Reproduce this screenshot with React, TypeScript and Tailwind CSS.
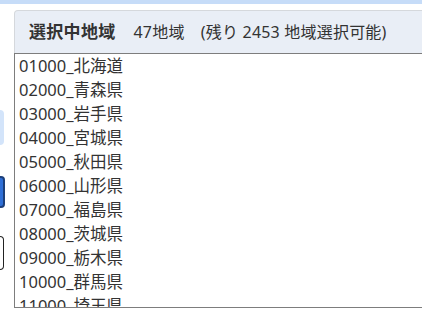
const PREFS = [
  '01000_北海道',
  '02000_青森県',
  '03000_岩手県',
  '04000_宮城県',
  '05000_秋田県',
  '06000_山形県',
  '07000_福島県',
  '08000_茨城県',
  '09000_栃木県',
  '10000_群馬県',
  '11000_埼玉県',
];

export default function App() {
  return (
    <div
      className="w-[422px] h-[330px] overflow-hidden bg-white text-[#333]"
      style={{ fontFamily: '"Noto Sans", "Noto Sans CJK JP", sans-serif' }}
    >
      <div className="h-[4px] bg-[#c6dcf8]" />
      <div className="flex">
        {/* clipped buttons of the neighbouring panel */}
        <div className="w-[6px] shrink-0 flex flex-col">
          <div className="mt-[106px] h-[35px] w-[4px] rounded-r-[4px] bg-[#d3e4fa]" />
          <div className="mt-[31px] h-[32px] w-[5px] rounded-r-[4px] border-2 border-l-0 border-[#1c3f7a] bg-[#2f6fd6]" />
          <div className="mt-[28px] h-[34px] w-[4px] rounded-r-[4px] border-[1.5px] border-l-0 border-[#222] bg-white" />
        </div>
        <div className="ml-[8px] mt-[6px] w-[430px] shrink-0">
          <div className="h-[43px] flex items-center gap-[18px] pl-[14px] rounded-tl-[4px] border border-b-0 border-[#d5d8dc] bg-[#e9eef6]">
            <span className="text-[17px] font-bold tracking-[0.3px]">選択中地域</span>
            <span className="text-[16px] tracking-[0.2px] whitespace-nowrap">
              47地域　(残り 2453 地域選択可能)
            </span>
          </div>
          <div className="h-[255px] overflow-hidden border border-[#7d7d7d] bg-white">
            {PREFS.map((p) => (
              <div key={p} className="h-[24px] leading-[24px] pl-[4px] text-[16.5px] whitespace-nowrap">
                {p}
              </div>
            ))}
          </div>
        </div>
      </div>
    </div>
  );
}
